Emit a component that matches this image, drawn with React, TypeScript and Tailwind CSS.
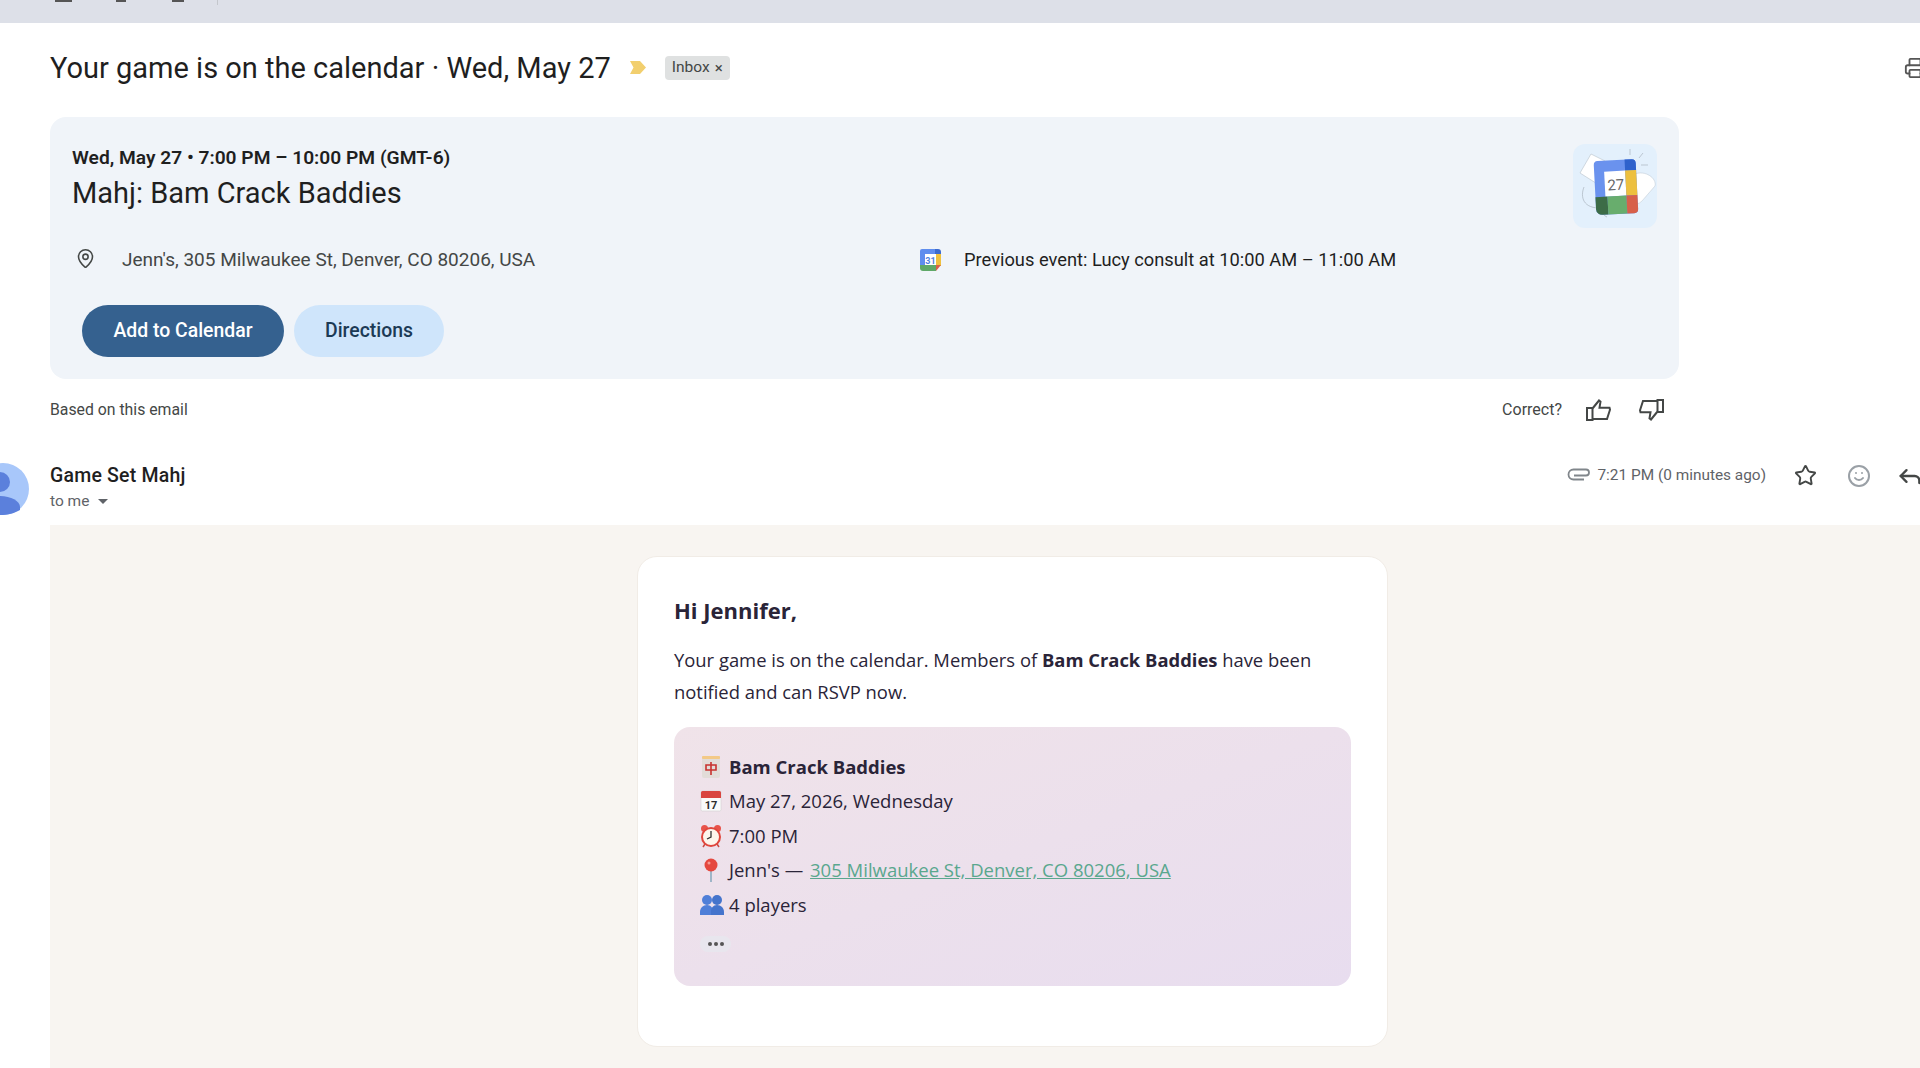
import { MapPin, Printer, Reply, Smile, Star } from 'lucide-react';

function ThumbUp() {
  return (
    <svg width="25" height="22" viewBox="0 0 25 22" fill="none" stroke="#444746" strokeWidth="2">
      <path d="M1 9h5.5v12H1zM6.500 9.500L13 1.500l1.500 1.200-1 6h10l.5 2-3 9.300H6.500" />
    </svg>
  );
}

function ThumbDown() {
  return (
    <svg width="25" height="22" viewBox="0 0 25 22" fill="none" stroke="#444746" strokeWidth="2">
      <path d="M24 13h-5.500V1H24zM18.500 12.500L12 20.500l-1.500-1.200 1-6h-10l-.5-2 3-9.300h14.500" />
    </svg>
  );
}

function PaperClip() {
  return (
    <svg width="23" height="13" viewBox="0 0 23 13" fill="none" stroke="#80868b" strokeWidth="1.800">
      <path d="M17 11.500H6.500a5 5 0 0 1 0-10H19a3 3 0 0 1 0 6H7" />
    </svg>
  );
}

function Marker() {
  return (
    <svg width="16" height="13" viewBox="0 0 16 13">
      <polygon points="0,0 10,0 16,6.500 10,13 0,13 3.500,6.500" fill="#f2cf6e" />
    </svg>
  );
}

function Avatar() {
  return (
    <svg width="52" height="52" viewBox="0 0 52 52" className="shrink-0 ml-[-23px]">
      <circle cx="26" cy="26" r="26" fill="#a8c7fa" />
      <circle cx="23" cy="19" r="10" fill="#5b80dc" />
      <path d="M3 47c0-9 9-14 20-14s20 5 20 11v3c-5 3-12 5-20 5s-15-2-20-5z" fill="#5b80dc" />
    </svg>
  );
}

function SmallCalendar() {
  return (
    <svg width="21" height="22" viewBox="0 0 21 22">
      <path d="M2 0h15v5H5v12H0V2a2 2 0 0 1 2-2z" fill="#5f8dee" />
      <path d="M15 0h3a3 3 0 0 1 3 3v2h-6z" fill="#3c6bd0" />
      <rect x="5" y="5" width="11" height="12" fill="#fff" />
      <rect x="16" y="5" width="5" height="12" fill="#eec03f" />
      <path d="M0 16h16v6H3a3 3 0 0 1-3-3z" fill="#5fa868" />
      <path d="M16 16h5l-5 6z" fill="#d9604a" />
      <text x="10.500" y="14.500" textAnchor="middle" fontSize="9" fontWeight="700" fill="#4f7fe0" fontFamily="Roboto, sans-serif">31</text>
    </svg>
  );
}

function CalendarArt() {
  return (
    <svg width="84" height="84" viewBox="0 0 84 84" className="rounded-xl bg-[#e3f0fc] shrink-0">
      <path d="M18 10l14 7-6 24-19-12z" fill="#fff" stroke="#b9c2cb" strokeWidth="0.600" />
      <path d="M62 30c10-4 22 4 20 12l-13 15c-6 6-17 5-22-4z" fill="#fff" stroke="#c5ced6" strokeWidth="0.600" />
      <path d="M11 43c-4 10-1 22 18 21M29 65c0 4 2 7 5 8" fill="none" stroke="#aab4be" strokeWidth="0.700" />
      <path d="M57 5v6M70 9l-4 5M68 21h7" stroke="#aab4be" strokeWidth="0.700" />
      <g transform="rotate(-3 45 44)">
        <path d="M26 16h34a4 4 0 0 1 4 4v46a4 4 0 0 1-4 4H28a6 6 0 0 1-6-6V20a4 4 0 0 1 4-4z" fill="#6a92ee" />
        <path d="M53 16h7a4 4 0 0 1 4 4v7H53z" fill="#2f62cc" />
        <rect x="32" y="27" width="21" height="25" fill="#fff" />
        <rect x="53" y="27" width="11" height="25" fill="#edc03f" />
        <path d="M22 52h12v18h-6a6 6 0 0 1-6-6z" fill="#3c6c47" />
        <rect x="34" y="52" width="19" height="18" fill="#68ad6d" />
        <path d="M53 52h11v14a4 4 0 0 1-4 4h-7z" fill="#d8604a" />
        <text x="43" y="46" textAnchor="middle" fontSize="15" fill="#666" fontFamily="Roboto, sans-serif">27</text>
      </g>
    </svg>
  );
}

function TileEmoji() {
  return (
    <svg width="22" height="22" viewBox="0 0 22 22">
      <rect x="2" y="0" width="18" height="22" rx="2" fill="#e2dcd8" />
      <rect x="2" y="0" width="18" height="3" rx="1" fill="#f3c987" />
      <path d="M6 9h10v5H6zM11 6v13" fill="none" stroke="#c8322f" strokeWidth="1.600" />
    </svg>
  );
}

function CalendarEmoji() {
  return (
    <svg width="22" height="22" viewBox="0 0 22 22">
      <rect x="1" y="1" width="20" height="20" rx="1.500" fill="#fafafa" stroke="#c8c8c8" strokeWidth="0.500" />
      <path d="M1 2.500A1.500 1.500 0 0 1 2.500 1h17A1.500 1.500 0 0 1 21 2.500V8H1z" fill="#d9453f" />
      <text x="11" y="19" textAnchor="middle" fontSize="11" fontWeight="700" fill="#2c2c2c" fontFamily="Roboto, sans-serif">17</text>
    </svg>
  );
}

function ClockEmoji() {
  return (
    <svg width="22" height="24" viewBox="0 0 22 24">
      <circle cx="4.500" cy="4.500" r="3.500" fill="#e8534a" />
      <circle cx="17.500" cy="4.500" r="3.500" fill="#e8534a" />
      <path d="M5 20l-2 3M17 20l2 3" stroke="#c94a42" strokeWidth="1.500" />
      <circle cx="11" cy="13" r="9" fill="#fdf6ec" stroke="#e0463c" strokeWidth="2" />
      <path d="M11 7v6l-4 2" fill="none" stroke="#333" strokeWidth="1.300" />
    </svg>
  );
}

function PinEmoji() {
  return (
    <svg width="22" height="24" viewBox="0 0 22 24">
      <path d="M11 11v13" stroke="#9fb6c8" strokeWidth="2" />
      <circle cx="11" cy="7" r="6.500" fill="#e5483f" />
      <circle cx="9" cy="5" r="1.500" fill="#f49b93" />
    </svg>
  );
}

function PeopleEmoji() {
  return (
    <svg width="24" height="22" viewBox="0 0 24 22">
      <circle cx="7" cy="6" r="5" fill="#4f7fd8" />
      <path d="M0 21v-3c0-4 3-7 7-7s6 3 6 7v3z" fill="#4f7fd8" />
      <circle cx="17" cy="6" r="5" fill="#4474cc" />
      <path d="M11 21v-3c0-4 2-7 6-7s7 3 7 7v3z" fill="#4474cc" />
    </svg>
  );
}

const rows = [
  { icon: <CalendarEmoji />, text: 'May 27, 2026, Wednesday' },
  { icon: <ClockEmoji />, text: '7:00 PM' },
];

export default function App() {
  return (
    <div className="w-[1920px] h-[1068px] overflow-hidden bg-white flex flex-col font-['Roboto',sans-serif] text-[#1f1f1f]">
      <div className="h-[23px] shrink-0 bg-[#dde0e8] flex items-start pl-[55px]">
        <div className="w-[17px] h-[2px] bg-[#555]" />
        <div className="w-[10px] h-[2px] ml-[44px] bg-[#555]" />
        <div className="w-[12px] h-[2px] ml-[46px] bg-[#555]" />
        <div className="w-px h-[5px] ml-[33px] bg-[#c4c7cc]" />
      </div>

      <div className="flex items-center h-[54px] mt-[18px] pl-[50px] shrink-0 overflow-hidden">
        <h1 className="text-[29px] font-normal leading-none whitespace-nowrap">Your game is on the calendar · Wed, May 27</h1>
        <div className="ml-[19px] mt-[-2px]"><Marker /></div>
        <div className="ml-[19px] h-6 w-[65px] rounded bg-[#dfe1e1] flex items-center justify-center gap-[5px] text-[15.500px] text-[#444746]">
          <span>Inbox</span>
          <span className="text-[15px]">×</span>
        </div>
        <div className="ml-auto mr-[-6px]">
          <Printer size={22} color="#555" strokeWidth={2} />
        </div>
      </div>

      <div className="w-[1629px] h-[262px] shrink-0 ml-[50px] mt-[22px] rounded-2xl bg-[#f0f4f9] pl-[22px] pr-[22px] pt-[29px] flex flex-col">
        <div className="flex items-start justify-between h-[102px]">
          <div>
            <div className="text-[19.200px] leading-[24px] font-semibold">Wed, May 27 • 7:00 PM – 10:00 PM (GMT-6)</div>
            <div className="text-[29px] leading-[36px] mt-[5px]">Mahj: Bam Crack Baddies</div>
          </div>
          <div className="mt-[-2px]"><CalendarArt /></div>
        </div>
        <div className="flex items-center mt-[-2px] h-7">
          <div className="w-[47px] ml-[3px] mt-[-4px]"><MapPin size={21} color="#444746" strokeWidth={1.800} /></div>
          <div className="text-[19px] text-[#444746] w-[798px]">Jenn's, 305 Milwaukee St, Denver, CO 80206, USA</div>
          <div className="w-[44px]"><SmallCalendar /></div>
          <div className="text-[18.300px] text-[#1f1f1f]">Previous event: Lucy consult at 10:00 AM – 11:00 AM</div>
        </div>
        <div className="flex gap-[10px] mt-[31px] ml-[10px]">
          <button className="w-[202px] h-[52px] rounded-full bg-[#35618f] text-white text-[19.400px] font-medium">Add to Calendar</button>
          <button className="w-[150px] h-[52px] rounded-full bg-[#cfe5fb] text-[#1c3a55] text-[19.400px] font-medium">Directions</button>
        </div>
      </div>

      <div className="flex items-center justify-between h-7 mt-[17px] ml-[50px] w-[1614px] shrink-0">
        <span className="text-[15.800px] text-[#444746]">Based on this email</span>
        <div className="flex items-center">
          <span className="text-[16px] text-[#444746]">Correct?</span>
          <span className="ml-[24px]"><ThumbUp /></span>
          <span className="ml-[28px]"><ThumbDown /></span>
        </div>
      </div>

      <div className="flex h-[72px] mt-[39px] shrink-0 overflow-hidden">
        <Avatar />
        <div className="ml-[21px] flex-1 min-w-0">
          <div className="flex items-center h-[26px]">
            <span className="text-[19.500px] font-medium tracking-[0.200px]">Game Set Mahj</span>
            <div className="ml-auto flex items-center">
              <div className="mt-[-3px]"><PaperClip /></div>
              <span className="ml-[7px] text-[15.400px] text-[#5f6368]">7:21 PM (0 minutes ago)</span>
              <Star size={23} color="#444746" strokeWidth={2} className="ml-[28px] mt-[-2px]" />
              <Smile size={24} color="#9aa0a6" strokeWidth={2} className="ml-[30px] mt-[-1px]" />
              <Reply size={28} color="#444746" strokeWidth={2} className="ml-[25px] mr-[-4px]" />
            </div>
          </div>
          <div className="flex items-center text-[15.500px] text-[#5f6368] mt-[1px]">
            <span>to me</span>
            <span className="ml-[9px] w-0 h-0 border-x-[5px] border-x-transparent border-t-[5px] border-t-[#5f6368]" />
          </div>
        </div>
      </div>

      <div className="flex-1 min-h-0 ml-[50px] mt-[-10px] bg-[#f8f5f1] pl-[587px] pt-[31px] font-['Open_Sans',sans-serif] text-[#2a2438]">
        <div className="w-[751px] h-[491px] rounded-[20px] bg-white border border-[#f1ece6] pt-[34px] px-[36px]">
          <div className="text-[22px] leading-[38px] font-bold">Hi Jennifer,</div>
          <p className="text-[18.400px] leading-[31.500px] mt-[15px]">
            Your game is on the calendar. Members of <b>Bam Crack Baddies</b> have been notified and can RSVP now.
          </p>
          <div className="mt-[20px] h-[259px] rounded-2xl bg-gradient-to-br from-[#f0e3e9] to-[#e8ddef] pl-[26px] pt-[23px] text-[18.500px] leading-[34.600px]">
            <div className="flex items-center h-[34px] font-bold">
              <span className="w-[29px]"><TileEmoji /></span>Bam Crack Baddies
            </div>
            {rows.map((r) => (
              <div key={r.text} className="flex items-center h-[34.600px]">
                <span className="w-[29px]">{r.icon}</span>{r.text}
              </div>
            ))}
            <div className="flex items-center h-[34.600px]">
              <span className="w-[29px]"><PinEmoji /></span>
              <span>Jenn's — <a className="ml-[2px] text-[#5aa78e] underline">305 Milwaukee St, Denver, CO 80206, USA</a></span>
            </div>
            <div className="flex items-center h-[34.600px]">
              <span className="w-[29px]"><PeopleEmoji /></span>4 players
            </div>
            <div className="w-[31px] h-4 rounded-full bg-[#e8e6ee] mt-[14px] flex items-center justify-center gap-[2px]">
              <span className="w-1 h-1 rounded-full bg-[#555]" />
              <span className="w-1 h-1 rounded-full bg-[#555]" />
              <span className="w-1 h-1 rounded-full bg-[#555]" />
            </div>
          </div>
        </div>
      </div>
    </div>
  );
}
